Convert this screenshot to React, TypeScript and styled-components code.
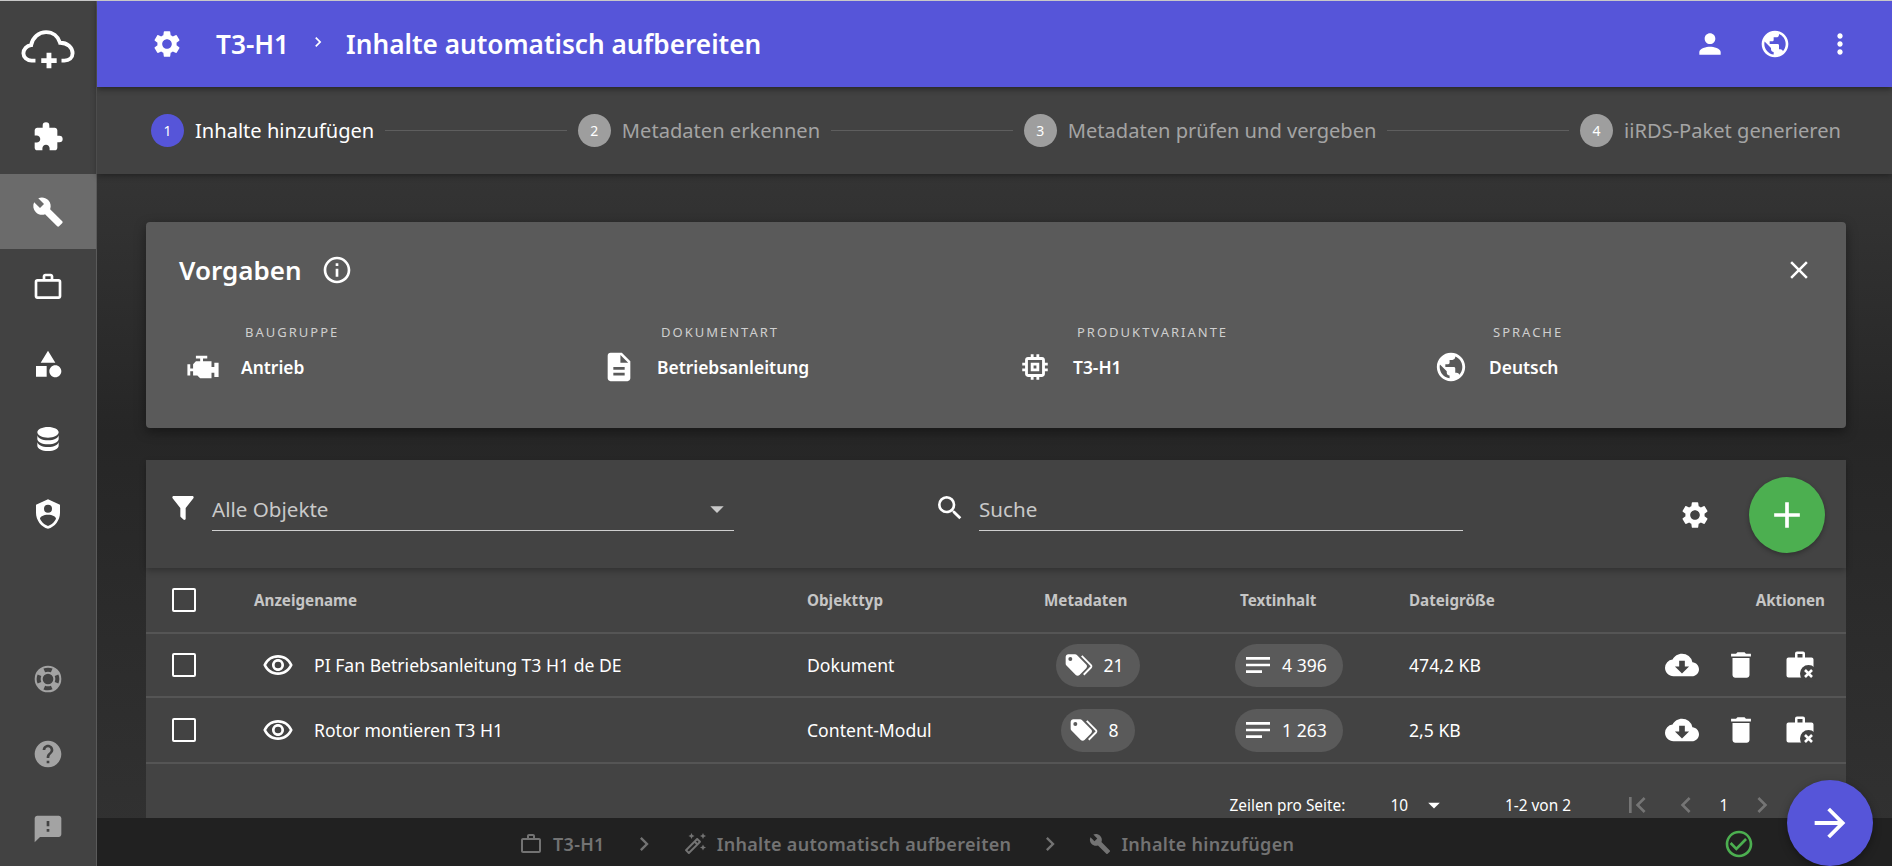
import { ReactNode } from "react";
import styled, { createGlobalStyle } from "styled-components";
import {
  MdAdd,
  MdArrowDropDown,
  MdArrowForward,
  MdBuild,
  MdCheckCircleOutline,
  MdChevronLeft,
  MdChevronRight,
  MdClose,
  MdCloudDownload,
  MdDelete,
  MdDescription,
  MdExtension,
  MdFeedback,
  MdFirstPage,
  MdHelp,
  MdInfoOutline,
  MdMemory,
  MdMoreVert,
  MdNotes,
  MdOutlineAutoFixHigh,
  MdOutlineRemoveRedEye,
  MdPerson,
  MdPublic,
  MdSearch,
  MdSettings,
  MdWorkOutline,
} from "react-icons/md";

const GlobalStyle = createGlobalStyle`
  html, body, #root {
    margin: 0;
    height: 100%;
    overflow: hidden;
  }
  body {
    font-family: "Noto Sans", "Open Sans", sans-serif;
    color: #fff;
    background: #333;
  }
  * {
    box-sizing: border-box;
  }
`;

const Shell = styled.div`
  position: relative;
  display: flex;
  height: 100%;
  border-top: 1px solid #c8c8c8;
  overflow: hidden;
`;

const Sidebar = styled.nav`
  flex: 0 0 97px;
  display: flex;
  flex-direction: column;
  background: #424242;
  border-right: 1px solid #5a5a5a;
`;

const LogoItem = styled.div`
  flex: 0 0 98px;
  display: flex;
  align-items: center;
  justify-content: center;
  padding-bottom: 2px;
`;

const NavItem = styled.div<{ $active?: boolean; $muted?: boolean; $pushed?: boolean }>`
  flex: 0 0 75px;
  display: flex;
  align-items: center;
  justify-content: center;
  font-size: 32px;
  margin-top: ${(p) => (p.$pushed ? 2 : 0)}px;
  background: ${(p) => (p.$active ? "#6b6b6b" : "transparent")};
  color: ${(p) => (p.$muted ? "#a3a3a3" : "#fff")};
`;

const NavSpacer = styled.div`
  flex: 1;
`;

const Main = styled.div`
  flex: 1;
  min-width: 0;
  display: flex;
  flex-direction: column;
  background: linear-gradient(#343434 0, #343434 20%, #262626 50%, #2d2d2d 78%, #323232 100%);
`;

const Header = styled.header`
  position: relative;
  z-index: 3;
  flex: 0 0 86px;
  display: flex;
  align-items: center;
  padding: 0 36px 0 54px;
  background: #5655d9;
  box-shadow: 0 2px 6px rgba(0, 0, 0, 0.45);
`;

const HeaderGear = styled.span`
  display: flex;
  font-size: 32px;
  margin-right: 33px;
`;

const HeaderTitle = styled.h1`
  margin: 0;
  font-size: 26.2px;
  font-weight: 600;
  line-height: 1;
  white-space: nowrap;
`;

const HeaderChevron = styled.span`
  display: flex;
  width: 57px;
  justify-content: center;
  font-size: 20px;
  margin-top: -4px;
`;

const HeaderActions = styled.div`
  margin-left: auto;
  display: flex;
  align-items: center;
  gap: 33px;
  font-size: 32px;
`;

const Stepper = styled.div`
  position: relative;
  z-index: 2;
  flex: 0 0 87px;
  display: flex;
  align-items: center;
  padding: 0 51px 0 54px;
  background: #424242;
  box-shadow: 0 2px 6px rgba(0, 0, 0, 0.35);
`;

const StepCircle = styled.span<{ $active?: boolean }>`
  flex: 0 0 33px;
  height: 33px;
  border-radius: 50%;
  display: flex;
  align-items: center;
  justify-content: center;
  font-size: 14px;
  background: ${(p) => (p.$active ? "#5655d9" : "#9e9e9e")};
  color: #fff;
`;

const StepLabel = styled.span<{ $active?: boolean }>`
  margin-left: 11px;
  font-size: 20.1px;
  white-space: nowrap;
  color: ${(p) => (p.$active ? "#fff" : "#a4a4a4")};
`;

const StepLine = styled.span`
  flex: 1;
  height: 1px;
  margin: 0 11px;
  background: #5e5e5e;
`;

const Content = styled.main`
  flex: 1;
  min-height: 0;
  overflow: hidden;
  display: flex;
  flex-direction: column;
  gap: 32px;
  padding: 48px 46px 0 49px;
`;

const PresetCard = styled.section`
  flex: 0 0 206px;
  padding: 26px 32px 0 33px;
  background: #5a5a5a;
  border-radius: 4px;
  box-shadow: 0 4px 12px rgba(0, 0, 0, 0.4);
`;

const PresetHead = styled.div`
  display: flex;
  align-items: center;
  height: 44px;
`;

const PresetTitle = styled.h2`
  margin: 0;
  font-size: 26px;
  font-weight: 600;
`;

const InfoIcon = styled.span`
  display: flex;
  font-size: 32px;
  margin-left: 19px;
`;

const CloseIcon = styled.span`
  display: flex;
  margin-left: auto;
  font-size: 30px;
`;

const PresetGrid = styled.div`
  display: grid;
  grid-template-columns: repeat(4, 416px);
  margin-top: 30px;
`;

const PresetItem = styled.div`
  display: grid;
  grid-template-columns: 48px 1fr;
  column-gap: 14px;
  align-items: center;
  grid-template-rows: 20px 50px;
`;

const PresetLabel = styled.span`
  grid-column: 2;
  margin-left: 4px;
  font-size: 13px;
  letter-spacing: 2px;
  color: #cfcfcf;
  white-space: nowrap;
`;

const PresetIcon = styled.span`
  grid-column: 1;
  display: flex;
  justify-content: center;
  font-size: 34px;
`;

const PresetValue = styled.span`
  font-size: 17.4px;
  font-weight: 600;
  white-space: nowrap;
`;

const TableCard = styled.section`
  flex: 0 0 auto;
  background: #434343;
`;

const Toolbar = styled.div`
  height: 108px;
  display: flex;
  align-items: flex-start;
  padding: 0 21px 0 21px;
  box-shadow: 0 3px 6px rgba(0, 0, 0, 0.25);
`;

const ToolIcon = styled.span`
  display: flex;
  width: 45px;
  padding-top: 32px;
  font-size: 32px;
`;

const FieldBox = styled.div<{ $width: number }>`
  position: relative;
  width: ${(p) => p.$width}px;
  height: 71px;
  margin-right: ${(p) => (p.$width > 500 ? 200 : 0)}px;
  display: flex;
  align-items: center;
  justify-content: space-between;
  padding-top: 27px;
  font-size: 20.6px;
  color: #c9c9c9;
  border-bottom: 1px solid #cfcfcf;
`;

const FieldArrow = styled.span`
  display: flex;
  font-size: 32px;
  margin-right: 1px;
`;

const ToolGear = styled.span`
  display: flex;
  margin-left: auto;
  margin-right: 38px;
  padding-top: 39px;
  font-size: 32px;
`;

const AddButton = styled.button`
  width: 76px;
  height: 76px;
  margin-top: 17px;
  border: 0;
  border-radius: 50%;
  display: flex;
  align-items: center;
  justify-content: center;
  background: #4caf50;
  color: #fff;
  font-size: 44px;
  box-shadow: 0 2px 5px rgba(0, 0, 0, 0.3);
`;

const TableRow = styled.div<{ $height: number }>`
  display: grid;
  grid-template-columns: 108px 553px 237px 196px 169px 200px 1fr;
  align-items: center;
  height: ${(p) => p.$height}px;
  border-bottom: 2px solid #555;
`;

const HeadCell = styled.span<{ $right?: boolean }>`
  font-size: 15.2px;
  font-weight: 700;
  color: #c6c6c6;
  text-align: ${(p) => (p.$right ? "right" : "left")};
  padding-right: ${(p) => (p.$right ? 21 : 0)}px;
`;

const CheckCell = styled.div`
  padding-left: 26px;
`;

const CheckBox = styled.span`
  display: block;
  width: 24px;
  height: 24px;
  border: 2.5px solid #fff;
  border-radius: 2px;
`;

const NameCell = styled.div`
  display: flex;
  align-items: center;
  gap: 20px;
  padding-left: 8px;
  font-size: 17.6px;
  white-space: nowrap;
`;

const EyeIcon = styled.span`
  display: flex;
  font-size: 32px;
`;

const BodyCell = styled.span`
  font-size: 17.6px;
  white-space: nowrap;
`;

const MetaCell = styled.div`
  display: flex;
  justify-content: center;
  width: 108px;
`;

const TextCell = styled.div`
  display: flex;
  margin-left: -5px;
`;

const Chip = styled.span`
  height: 43px;
  padding: 0 16px 0 7px;
  display: inline-flex;
  align-items: center;
  gap: 8px;
  border-radius: 22px;
  background: #5a5a5a;
  font-size: 17.6px;
  white-space: nowrap;
`;

const ChipIcon = styled.span`
  display: flex;
  font-size: 32px;
`;

const ActionCell = styled.div`
  display: flex;
  justify-content: flex-end;
  align-items: center;
  padding-right: 29px;
  gap: 25px;
  font-size: 34px;
`;

const ActionIcon = styled.span`
  display: flex;
`;

const Pagination = styled.div`
  height: 82px;
  display: flex;
  align-items: center;
  padding-right: 68px;
  justify-content: flex-end;
  font-size: 15.4px;
`;

const PageSize = styled.span`
  display: flex;
  align-items: center;
  margin-left: 45px;
  font-size: 15.4px;
`;

const PageArrow = styled.span`
  display: flex;
  font-size: 28px;
  margin-left: 12px;
  margin-right: 57px;
`;

const PageNav = styled.span<{ $gap?: number }>`
  display: flex;
  font-size: 32px;
  color: #757575;
  margin-left: ${(p) => p.$gap ?? 0}px;
`;

const PageNumber = styled.span`
  width: 44px;
  text-align: center;
  font-size: 15.4px;
`;

const Footer = styled.footer`
  position: relative;
  z-index: 2;
  flex: 0 0 48px;
  display: flex;
  align-items: center;
  padding: 3px 137px 0 422px;
  background: #212121;
  color: #737373;
  font-size: 18px;
  font-weight: 600;
`;

const Crumb = styled.span`
  display: flex;
  align-items: center;
  gap: 10px;
  white-space: nowrap;
  letter-spacing: 0.3px;
`;

const CrumbIcon = styled.span<{ $small?: boolean }>`
  display: flex;
  font-size: ${(p) => (p.$small ? 22 : 24)}px;
`;

const CrumbChevron = styled.span`
  display: flex;
  width: 78px;
  justify-content: center;
  font-size: 28px;
`;

const StatusIcon = styled.span`
  display: flex;
  margin-left: auto;
  font-size: 32px;
  color: #4caf50;
`;

const NextButton = styled.button`
  position: absolute;
  right: 19px;
  bottom: 0;
  width: 86px;
  height: 86px;
  border: 0;
  border-radius: 50%;
  display: flex;
  align-items: center;
  justify-content: center;
  background: #5655d9;
  color: #fff;
  font-size: 46px;
  z-index: 4;
  box-shadow: 0 3px 8px rgba(0, 0, 0, 0.35);
`;

// mdi icons that the md set does not have
function Mdi({ d, size = "1em" }: { d: string; size?: string | number }) {
  return (
    <svg width={size} height={size} viewBox="0 0 24 24" fill="currentColor">
      <path d={d} />
    </svg>
  );
}

const SHAPE =
  "M11,13.5V21.5H3V13.5H11M12,2L17.5,11H6.5L12,2M17.5,13C20,13 22,15 22,17.5C22,20 20,22 17.5,22C15,22 13,20 13,17.5C13,15 15,13 17.5,13Z";
const DATABASE =
  "M12,3C7.58,3 4,4.79 4,7C4,9.21 7.58,11 12,11C16.42,11 20,9.21 20,7C20,4.79 16.42,3 12,3M4,9V12C4,14.21 7.58,16 12,16C16.42,16 20,14.21 20,12V9C20,11.21 16.42,13 12,13C7.58,13 4,11.21 4,9M4,14V17C4,19.21 7.58,21 12,21C16.42,21 20,19.21 20,17V14C20,16.21 16.42,18 12,18C7.58,18 4,16.21 4,14Z";
const SHIELD =
  "M12,1L3,5V11C3,16.55 6.84,21.74 12,23C17.16,21.74 21,16.55 21,11V5L12,1M12,5A3,3 0 0,1 15,8A3,3 0 0,1 12,11A3,3 0 0,1 9,8A3,3 0 0,1 12,5M17.13,17C15.92,18.85 14.11,20.24 12,20.92C9.89,20.24 8.08,18.85 6.87,17C6.53,16.5 6.24,16 6,15.47C6,13.82 8.71,12.47 12,12.47C15.29,12.47 18,13.79 18,15.47C17.76,16 17.47,16.5 17.13,17Z";
const LIFEBUOY =
  "M19.79,15.41C20.74,13.24 20.74,10.75 19.79,8.59L17.05,9.83C17.65,11.21 17.65,12.78 17.06,14.17L19.79,15.41M15.42,4.21C13.25,3.26 10.76,3.26 8.59,4.21L9.83,6.94C11.22,6.35 12.79,6.35 14.18,6.95L15.42,4.21M4.21,8.58C3.26,10.76 3.26,13.24 4.21,15.42L6.95,14.17C6.35,12.79 6.35,11.21 6.95,9.82L4.21,8.58M8.59,19.79C10.76,20.74 13.25,20.74 15.42,19.78L14.18,17.05C12.8,17.65 11.22,17.65 9.84,17.06L8.59,19.79M12,2A10,10 0 0,1 22,12A10,10 0 0,1 12,22A10,10 0 0,1 2,12A10,10 0 0,1 12,2M12,8A4,4 0 0,0 8,12A4,4 0 0,0 12,16A4,4 0 0,0 16,12A4,4 0 0,0 12,8Z";
const ENGINE =
  "M7,4V6H10V8H7L5,10V13H3V10H1V18H3V15H5V18H8L10,20H18V16H20V19H23V9H20V12H18V8H12V6H15V4H7Z";
const TAGS =
  "M5.5,9A1.5,1.5 0 0,0 7,7.5A1.5,1.5 0 0,0 5.5,6A1.5,1.5 0 0,0 4,7.5A1.5,1.5 0 0,0 5.5,9M17.41,11.58C17.77,11.94 18,12.44 18,13C18,13.55 17.78,14.05 17.41,14.41L12.41,19.41C12.05,19.77 11.55,20 11,20C10.45,20 9.95,19.78 9.58,19.41L2.59,12.42C2.22,12.05 2,11.55 2,11V6C2,4.89 2.89,4 4,4H9C9.55,4 10.05,4.22 10.41,4.58L17.41,11.58M13.54,5.71L14.54,4.71L21.41,11.58C21.78,11.94 22,12.45 22,13C22,13.55 21.78,14.05 21.42,14.41L16.04,19.79L15.04,18.79L20.75,13L13.54,5.71Z";
const FILTER =
  "M14,12V19.88C14.04,20.18 13.94,20.5 13.71,20.71C13.32,21.1 12.69,21.1 12.3,20.71L10.29,18.7C10.06,18.47 9.96,18.16 10,17.87V12H9.97L4.21,4.62C3.87,4.19 3.95,3.56 4.38,3.22C4.57,3.08 4.78,3 5,3H19C19.22,3 19.43,3.08 19.62,3.22C20.05,3.56 20.13,4.19 19.79,4.62L14.03,12H14Z";

function CloudPlusLogo() {
  return (
    <svg width="54" height="42" viewBox="0 0 56 42" fill="none" stroke="#fff" strokeWidth="4">
      <path d="M15 33H11C6 33 2.5 29.5 2.5 25.5C2.5 21 6 17.5 10.5 17C12 9 18.5 3.5 26 3.5C33 3.5 38.5 8 40.5 14.5C48 14.5 53.5 19 53.5 25.5C53.5 30 50 33 45 33H42" />
      <path d="M29 25V41M21 33H37" strokeWidth="5" />
    </svg>
  );
}

function CaseRemove() {
  return (
    <svg width="34" height="34" viewBox="0 0 34 34">
      <path
        fill="#fff"
        fillRule="evenodd"
        d="M14 3.5h6a2 2 0 0 1 2 2v4h6.5a2 2 0 0 1 2 2v16a2 2 0 0 1-2 2h-23a2 2 0 0 1-2-2v-16a2 2 0 0 1 2-2H12v-4a2 2 0 0 1 2-2zm.5 2.5v3.5h5V6h-5z"
      />
      <circle cx="25.5" cy="25.5" r="8.5" fill="#434343" />
      <path d="M22 22l7 7M29 22l-7 7" stroke="#fff" strokeWidth="2.6" />
    </svg>
  );
}

type Preset = { label: string; value: string; icon: ReactNode };

const presets: Preset[] = [
  { label: "BAUGRUPPE", value: "Antrieb", icon: <Mdi d={ENGINE} /> },
  { label: "DOKUMENTART", value: "Betriebsanleitung", icon: <MdDescription /> },
  { label: "PRODUKTVARIANTE", value: "T3-H1", icon: <MdMemory /> },
  { label: "SPRACHE", value: "Deutsch", icon: <MdPublic /> },
];

const steps = [
  "Inhalte hinzufügen",
  "Metadaten erkennen",
  "Metadaten prüfen und vergeben",
  "iiRDS-Paket generieren",
];

const rows = [
  { name: "PI Fan Betriebsanleitung T3 H1 de DE", type: "Dokument", meta: "21", text: "4 396", size: "474,2 KB", height: 64 },
  { name: "Rotor montieren T3 H1", type: "Content-Modul", meta: "8", text: "1 263", size: "2,5 KB", height: 66 },
];

function Step({ index, label, last }: { index: number; label: string; last: boolean }) {
  const active = index === 0;
  return (
    <>
      <StepCircle $active={active}>{index + 1}</StepCircle>
      <StepLabel $active={active}>{label}</StepLabel>
      {!last && <StepLine />}
    </>
  );
}

export default function App() {
  return (
    <>
      <GlobalStyle />
      <Shell>
        <Sidebar>
          <LogoItem>
            <CloudPlusLogo />
          </LogoItem>
          <NavItem><MdExtension /></NavItem>
          <NavItem $active><MdBuild /></NavItem>
          <NavItem><MdWorkOutline /></NavItem>
          <NavItem $pushed><Mdi d={SHAPE} /></NavItem>
          <NavItem><Mdi d={DATABASE} /></NavItem>
          <NavItem><Mdi d={SHIELD} /></NavItem>
          <NavSpacer />
          <NavItem $muted><Mdi d={LIFEBUOY} /></NavItem>
          <NavItem $muted><MdHelp /></NavItem>
          <NavItem $muted><MdFeedback /></NavItem>
        </Sidebar>

        <Main>
          <Header>
            <HeaderGear><MdSettings /></HeaderGear>
            <HeaderTitle>T3-H1</HeaderTitle>
            <HeaderChevron><MdChevronRight /></HeaderChevron>
            <HeaderTitle>Inhalte automatisch aufbereiten</HeaderTitle>
            <HeaderActions>
              <MdPerson />
              <MdPublic />
              <MdMoreVert />
            </HeaderActions>
          </Header>

          <Stepper>
            {steps.map((step, i) => (
              <Step key={step} index={i} label={step} last={i === steps.length - 1} />
            ))}
          </Stepper>

          <Content>
            <PresetCard>
              <PresetHead>
                <PresetTitle>Vorgaben</PresetTitle>
                <InfoIcon><MdInfoOutline /></InfoIcon>
                <CloseIcon><MdClose /></CloseIcon>
              </PresetHead>
              <PresetGrid>
                {presets.map((p) => (
                  <PresetItem key={p.label}>
                    <PresetLabel>{p.label}</PresetLabel>
                    <PresetIcon>{p.icon}</PresetIcon>
                    <PresetValue>{p.value}</PresetValue>
                  </PresetItem>
                ))}
              </PresetGrid>
            </PresetCard>

            <TableCard>
              <Toolbar>
                <ToolIcon><Mdi d={FILTER} /></ToolIcon>
                <FieldBox $width={522}>
                  Alle Objekte
                  <FieldArrow><MdArrowDropDown /></FieldArrow>
                </FieldBox>
                <ToolIcon><MdSearch /></ToolIcon>
                <FieldBox $width={484}>Suche</FieldBox>
                <ToolGear><MdSettings /></ToolGear>
                <AddButton><MdAdd /></AddButton>
              </Toolbar>

              <TableRow $height={66}>
                <CheckCell><CheckBox /></CheckCell>
                <HeadCell>Anzeigename</HeadCell>
                <HeadCell>Objekttyp</HeadCell>
                <HeadCell>Metadaten</HeadCell>
                <HeadCell>Textinhalt</HeadCell>
                <HeadCell>Dateigröße</HeadCell>
                <HeadCell $right>Aktionen</HeadCell>
              </TableRow>

              {rows.map((row) => (
                <TableRow key={row.name} $height={row.height}>
                  <CheckCell><CheckBox /></CheckCell>
                  <NameCell>
                    <EyeIcon><MdOutlineRemoveRedEye /></EyeIcon>
                    {row.name}
                  </NameCell>
                  <BodyCell>{row.type}</BodyCell>
                  <MetaCell>
                    <Chip>
                      <ChipIcon><Mdi d={TAGS} /></ChipIcon>
                      {row.meta}
                    </Chip>
                  </MetaCell>
                  <TextCell>
                    <Chip>
                      <ChipIcon><MdNotes /></ChipIcon>
                      {row.text}
                    </Chip>
                  </TextCell>
                  <BodyCell>{row.size}</BodyCell>
                  <ActionCell>
                    <ActionIcon><MdCloudDownload /></ActionIcon>
                    <ActionIcon><MdDelete /></ActionIcon>
                    <ActionIcon><CaseRemove /></ActionIcon>
                  </ActionCell>
                </TableRow>
              ))}

              <Pagination>
                Zeilen pro Seite:
                <PageSize>10</PageSize>
                <PageArrow><MdArrowDropDown /></PageArrow>
                1-2 von 2
                <PageNav $gap={50}><MdFirstPage /></PageNav>
                <PageNav $gap={17}><MdChevronLeft /></PageNav>
                <PageNumber>1</PageNumber>
                <PageNav><MdChevronRight /></PageNav>
              </Pagination>
            </TableCard>
          </Content>

          <Footer>
            <Crumb>
              <CrumbIcon><MdWorkOutline /></CrumbIcon>
              T3-H1
            </Crumb>
            <CrumbChevron><MdChevronRight /></CrumbChevron>
            <Crumb>
              <CrumbIcon><MdOutlineAutoFixHigh /></CrumbIcon>
              Inhalte automatisch aufbereiten
            </Crumb>
            <CrumbChevron><MdChevronRight /></CrumbChevron>
            <Crumb>
              <CrumbIcon $small><MdBuild /></CrumbIcon>
              Inhalte hinzufügen
            </Crumb>
            <StatusIcon><MdCheckCircleOutline /></StatusIcon>
          </Footer>
        </Main>

        <NextButton><MdArrowForward /></NextButton>
      </Shell>
    </>
  );
}
